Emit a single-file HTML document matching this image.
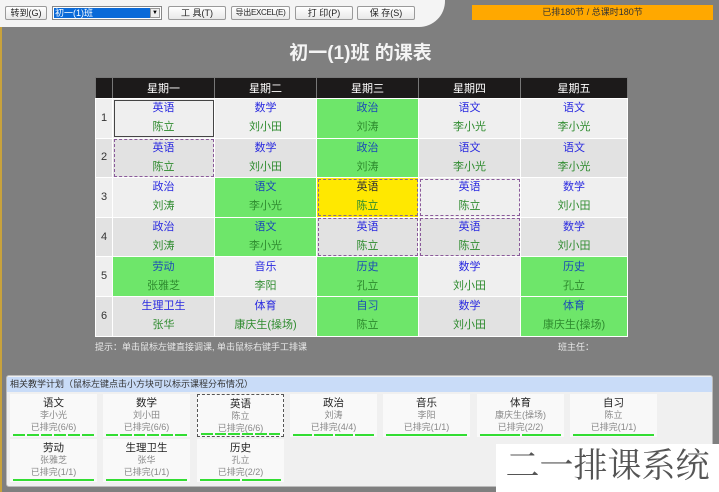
<!DOCTYPE html>
<html><head><meta charset="utf-8"><style>
*{margin:0;padding:0;box-sizing:border-box}
body{width:719px;height:492px;overflow:hidden;background:#7f7f7f;font-family:"Liberation Sans","Noto Sans CJK SC",sans-serif;position:relative}
.a{position:absolute}
.btn{position:absolute;top:6px;height:14px;background:linear-gradient(#fff,#e8e8e8);border:1px solid #9a9a9a;border-radius:2px;font-size:9px;line-height:12px;text-align:center;color:#222;white-space:nowrap;overflow:hidden}
table{position:absolute;left:95px;top:77px;border-collapse:collapse;font-size:11px}
td,th{border:1px solid #fff;text-align:center;padding:0}
th{background:#1c1a1a;color:#fff;font-weight:normal;height:21px;border-color:#777 #777 #fff #777}
td{width:102px;height:39.6px;line-height:19px}
td.n{width:17px;color:#333;background:#efefef}
tr.e td{background:#e2e2e2}
tr.o td{background:#efefef}
td .s{color:#2a2ae0;display:block}
td .t{color:#2e8b2e;display:block}
td.g{background:#6ee66a!important}
td.g .s{color:#1a4ab8}
td.y{background:#ffe800!important;outline:1px dashed #8a6a8a;outline-offset:-2px}
td.y .s{color:#333}
td.b{outline:1px solid #444;outline-offset:-2px}
td.d{outline:1px dashed #8a5a9a;outline-offset:-2px}
.card{position:absolute;width:87px;height:43px;background:#f9f9f9;text-align:center;font-size:9px;color:#888;line-height:11.5px;padding-top:3px}
.card b{display:block;font-weight:normal;color:#222;font-size:10.5px;line-height:13px}
.card i{position:absolute;left:3px;right:3px;bottom:1px;height:2px;display:flex;gap:2px;font-style:normal}
.card i span{flex:1;background:#33dd33}
</style></head><body>
<div class="a" style="left:0;top:26px;width:2px;height:466px;background:#c8a23c"></div>
<div class="a" style="left:0;top:0;width:445px;height:27px;background:#f4f4f4;border-bottom-right-radius:26px"></div>
<div class="btn" style="left:5px;width:42px">转到(G)</div>
<div class="a" style="left:52px;top:6px;width:110px;height:14px;background:#fff;border:1px solid #888"><div style="position:absolute;left:1px;top:1px;width:96px;height:10px;background:#0a6ad8;color:#fff;font-size:9px;line-height:10px;padding-left:1px">初一(1)班</div><div style="position:absolute;right:1px;top:1px;width:10px;height:10px;background:#eee;border:1px solid #999;font-size:6px;line-height:8px;text-align:center">▼</div></div>
<div class="btn" style="left:168px;width:58px">工 具(T)</div>
<div class="btn" style="left:231px;width:59px;font-size:8px;letter-spacing:-0.3px">导出EXCEL(E)</div>
<div class="btn" style="left:295px;width:58px">打 印(P)</div>
<div class="btn" style="left:357px;width:58px">保 存(S)</div>
<div class="a" style="left:472px;top:5px;width:241px;height:15px;background:#ffa800;font-size:9px;line-height:15px;text-align:center;color:#333">已排180节 / 总课时180节</div>
<div class="a" style="left:0;top:38px;width:719px;text-align:center;color:#f4f4f4;font-size:19px;font-weight:bold;padding-left:2px">初一(1)班 的课表</div>
<table>
<tr><th style="width:17px"></th><th>星期一</th><th>星期二</th><th>星期三</th><th>星期四</th><th style="width:107px">星期五</th></tr>
<tr class="o"><td class="n">1</td><td class="b"><span class="s">英语</span><span class="t">陈立</span></td><td><span class="s">数学</span><span class="t">刘小田</span></td><td class="g"><span class="s">政治</span><span class="t">刘涛</span></td><td><span class="s">语文</span><span class="t">李小光</span></td><td><span class="s">语文</span><span class="t">李小光</span></td></tr>
<tr class="e"><td class="n">2</td><td class="d"><span class="s">英语</span><span class="t">陈立</span></td><td><span class="s">数学</span><span class="t">刘小田</span></td><td class="g"><span class="s">政治</span><span class="t">刘涛</span></td><td><span class="s">语文</span><span class="t">李小光</span></td><td><span class="s">语文</span><span class="t">李小光</span></td></tr>
<tr class="o"><td class="n">3</td><td><span class="s">政治</span><span class="t">刘涛</span></td><td class="g"><span class="s">语文</span><span class="t">李小光</span></td><td class="y"><span class="s">英语</span><span class="t">陈立</span></td><td class="d"><span class="s">英语</span><span class="t">陈立</span></td><td><span class="s">数学</span><span class="t">刘小田</span></td></tr>
<tr class="e"><td class="n">4</td><td><span class="s">政治</span><span class="t">刘涛</span></td><td class="g"><span class="s">语文</span><span class="t">李小光</span></td><td class="d"><span class="s">英语</span><span class="t">陈立</span></td><td class="d"><span class="s">英语</span><span class="t">陈立</span></td><td><span class="s">数学</span><span class="t">刘小田</span></td></tr>
<tr class="o"><td class="n">5</td><td class="g"><span class="s">劳动</span><span class="t">张雅芝</span></td><td><span class="s">音乐</span><span class="t">李阳</span></td><td class="g"><span class="s">历史</span><span class="t">孔立</span></td><td><span class="s">数学</span><span class="t">刘小田</span></td><td class="g"><span class="s">历史</span><span class="t">孔立</span></td></tr>
<tr class="e"><td class="n">6</td><td><span class="s">生理卫生</span><span class="t">张华</span></td><td><span class="s">体育</span><span class="t">康庆生(操场)</span></td><td class="g"><span class="s">自习</span><span class="t">陈立</span></td><td><span class="s">数学</span><span class="t">刘小田</span></td><td class="g"><span class="s">体育</span><span class="t">康庆生(操场)</span></td></tr>
</table>
<div class="a" style="left:95px;top:340px;font-size:9px;color:#e8e8e8">提示：单击鼠标左键直接调课, 单击鼠标右键手工排课</div>
<div class="a" style="left:558px;top:340px;font-size:9px;color:#e8e8e8">班主任：</div>
<div class="a" style="left:6px;top:375px;width:707px;height:112px;background:#f0f0f0;border:1px solid #bbb;border-radius:3px"></div>
<div class="a" style="left:7px;top:377px;width:705px;height:15px;background:#c9dcf8;font-size:9px;line-height:15px;padding-left:3px;color:#333">相关教学计划（鼠标左键点击小方块可以标示课程分布情况）</div>
<div class="card" style="left:10px;top:394px"><b>语文</b>李小光<br>已排完(6/6)<i><span></span><span></span><span></span><span></span><span></span><span></span></i></div>
<div class="card" style="left:103px;top:394px"><b>数学</b>刘小田<br>已排完(6/6)<i><span></span><span></span><span></span><span></span><span></span><span></span></i></div>
<div class="card" style="left:197px;top:394px;border:1px dashed #555"><b>英语</b>陈立<br>已排完(6/6)<i><span></span><span></span><span></span><span></span><span></span><span></span></i></div>
<div class="card" style="left:290px;top:394px"><b>政治</b>刘涛<br>已排完(4/4)<i><span></span><span></span><span></span><span></span></i></div>
<div class="card" style="left:383px;top:394px"><b>音乐</b>李阳<br>已排完(1/1)<i><span></span></i></div>
<div class="card" style="left:477px;top:394px"><b>体育</b>康庆生(操场)<br>已排完(2/2)<i><span></span><span></span></i></div>
<div class="card" style="left:570px;top:394px"><b>自习</b>陈立<br>已排完(1/1)<i><span></span></i></div>
<div class="card" style="left:10px;top:439px"><b>劳动</b>张雅芝<br>已排完(1/1)<i><span></span></i></div>
<div class="card" style="left:103px;top:439px"><b>生理卫生</b>张华<br>已排完(1/1)<i><span></span></i></div>
<div class="card" style="left:197px;top:439px"><b>历史</b>孔立<br>已排完(2/2)<i><span></span><span></span></i></div>
<div class="a" style="left:496px;top:444px;width:223px;height:48px;background:#fff;font-family:'Liberation Serif','Noto Serif CJK SC',serif;font-size:34px;line-height:46px;color:#555;text-align:center">二一排课系统</div>
</body></html>
